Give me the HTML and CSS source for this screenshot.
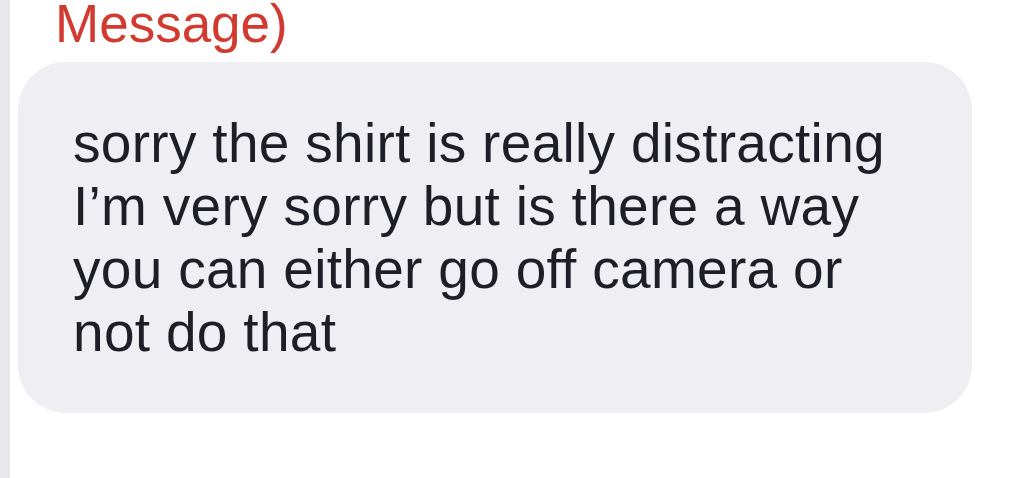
FILE: index.html
```html
<!DOCTYPE html>
<html>
<head>
<meta charset="utf-8">
<link rel="stylesheet" href="styles.css">
</head>
<body>
<div class="page">
  <div class="rail"></div>
  <div class="thread">
    <div class="sender">Message)</div>
    <div class="bubble">
      <p class="msg">sorry the shirt is really distracting<br>I’m very sorry but is there a way<br>you can either go off camera or<br>not do that</p>
    </div>
  </div>
</div>
</body>
</html>
```

FILE: styles.css
```css
html, body {
  margin: 0;
  padding: 0;
  background: #ffffff;
}
.page {
  display: flex;
  width: 1028px;
  height: 478px;
  overflow: hidden;
  font-family: "Liberation Sans", Arial, sans-serif;
}
.rail {
  width: 10px;
  flex: none;
  background: #e8e8ea;
}
.thread {
  flex: none;
  display: flex;
  flex-direction: column;
  padding-left: 8px;
}
.sender {
  color: #d23a30;
  font-size: 53px;
  line-height: 48px;
  padding-left: 37px;
  margin-bottom: 14px;
}
.bubble {
  width: 954px;
  height: 351px;
  box-sizing: border-box;
  background: #eeeef3;
  border-radius: 48px;
  padding: 50px 30px 0 55px;
}
.msg {
  margin: 0;
  color: #1e1e26;
  font-size: 55px;
  letter-spacing: 0.3px;
  line-height: 63px;
  white-space: nowrap;
}
```
